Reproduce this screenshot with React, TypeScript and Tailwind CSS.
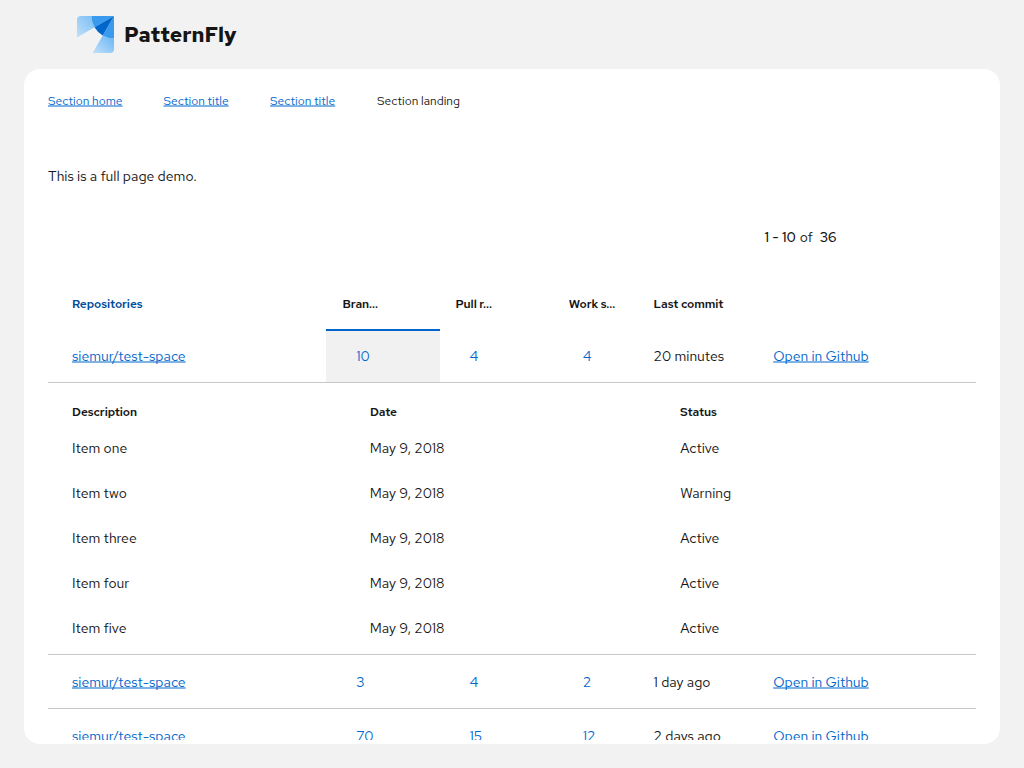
import React from "react";

const link = "text-[#0066cc] underline decoration-[#0066cc]/50 decoration-2 underline-offset-0 [text-decoration-skip-ink:none]";

const columns = "grid grid-cols-[278.45px_113.1px_113.2px_84.9px_119.6px_1fr]";

type Repo = {
  branches: string;
  pulls: string;
  spaces: string;
  commit: string;
  expanded?: boolean;
};

function Logo() {
  return (
    <svg width="37" height="37" viewBox="0 0 37 37" className="shrink-0">
      <defs>
        <linearGradient id="left" x1="18" y1="3" x2="0" y2="20" gradientUnits="userSpaceOnUse">
          <stop offset="0" stopColor="#7cc0f5" />
          <stop offset="1" stopColor="#bedefa" />
        </linearGradient>
        <linearGradient id="bottom" x1="34" y1="19" x2="18" y2="37" gradientUnits="userSpaceOnUse">
          <stop offset="0" stopColor="#6bb8f5" />
          <stop offset="1" stopColor="#bedefa" />
        </linearGradient>
      </defs>
      <path d="M4 0H14.5A22.5 22.5 0 0 0 17.5 11.25L0 21.4V4A4 4 0 0 1 4 0Z" fill="url(#left)" />
      <path d="M25.75 19.5A22.5 22.5 0 0 0 37 22.5V33A4 4 0 0 1 33 37H15.6Z" fill="url(#bottom)" />
      <path d="M37 0H14.5A22.5 22.5 0 0 0 17.5 11.25Z" fill="#3a9bee" />
      <path d="M37 0V22.5A22.5 22.5 0 0 1 25.75 19.5Z" fill="#3a9bee" />
      <path d="M37 0L17.5 11.25A22.5 22.5 0 0 0 25.75 19.5Z" fill="#0066cc" />
    </svg>
  );
}

function RepoRow({ branches, pulls, spaces, commit, expanded }: Repo) {
  return (
    <div className={`${columns} h-[54px] items-stretch border-b border-[#c7c7c7] text-[14px] leading-[21px]`}>
      <div className="flex items-center pl-6 pt-px">
        <a className={link}>siemur/test-space</a>
      </div>
      <div
        className={
          expanded
            ? "flex items-center border-t-2 border-[#0066cc] bg-[#f1f1f1] pb-px pl-[29.7px] text-[#0066cc]"
            : "flex items-center pl-[29.7px] pt-px text-[#0066cc]"
        }
      >
        {branches}
      </div>
      <div className="flex items-center pl-[30px] pt-px text-[#0066cc]">{pulls}</div>
      <div className="flex items-center pl-[30px] pt-px text-[#0066cc]">{spaces}</div>
      <div className="flex items-center pl-4 pt-px">{commit}</div>
      <div className="flex items-center pl-4 pt-px">
        <a className={link}>Open in Github</a>
      </div>
    </div>
  );
}

const items = [
  ["Item one", "Active"],
  ["Item two", "Warning"],
  ["Item three", "Active"],
  ["Item four", "Active"],
  ["Item five", "Active"],
];

export default function App() {
  return (
    <div className="flex h-[768px] w-[1024px] flex-col overflow-hidden bg-[#f2f2f2] font-['Red_Hat_Text','Lato',sans-serif] text-[#151515]">
      <header className="flex h-[69px] shrink-0 items-center gap-[10px] pl-[77px]">
        <Logo />
        <span className="pt-px font-['Red_Hat_Text','Inter',sans-serif] text-[21px] font-extrabold">
          PatternFly
        </span>
      </header>
      <main className="mx-6 mb-6 flex min-h-0 flex-1 flex-col rounded-2xl bg-white px-6 pb-1">
        <div className="flex min-h-0 flex-1 flex-col overflow-hidden">
          <nav className="mt-[23px] flex h-[18px] shrink-0 items-center text-[12px] leading-[18px]">
            <div className="w-[115.5px]"><a className={link}>Section home</a></div>
            <div className="w-[106.5px]"><a className={link}>Section title</a></div>
            <div className="w-[107px]"><a className={link}>Section title</a></div>
            <span>Section landing</span>
          </nav>
          <p className="mt-[56px] h-[21px] shrink-0 text-[14px] leading-[21px]">
            This is a full page demo.
          </p>
          <div className="mt-[40px] flex h-[21px] shrink-0 items-center pl-[716.5px] text-[14px] leading-[21px]">
            <b className="font-medium">1 - 10</b>
            <span className="ml-1">of</span>
            <b className="ml-[7px] font-medium">36</b>
          </div>
          <section className="mt-[31px] shrink-0">
            <div className={`${columns} h-[50px] items-center text-[12px] font-semibold leading-[18px] tracking-[-0.08px]`}>
              <div className="pl-6 text-[#004d99]">Repositories</div>
              <div className="pl-4">Bran...</div>
              <div className="pl-4">Pull r...</div>
              <div className="pl-4">Work s...</div>
              <div className="pl-4">Last commit</div>
              <div />
            </div>
            <RepoRow branches="10" pulls="4" spaces="4" commit="20 minutes" expanded />
            <div className="h-[272px] border-b border-[#c7c7c7] pl-6 pt-[14px]">
              <div className="grid h-[29px] grid-cols-[298px_310px_1fr] items-center text-[12px] font-semibold tracking-[-0.08px]">
                <div>Description</div>
                <div>Date</div>
                <div>Status</div>
              </div>
              {items.map(([name, status]) => (
                <div key={name} className="grid h-[45px] grid-cols-[297.8px_310.4px_1fr] items-center text-[14px]">
                  <div>{name}</div>
                  <div>May 9, 2018</div>
                  <div>{status}</div>
                </div>
              ))}
            </div>
            <RepoRow branches="3" pulls="4" spaces="2" commit="1 day ago" />
            <RepoRow branches="70" pulls="15" spaces="12" commit="2 days ago" />
          </section>
        </div>
      </main>
    </div>
  );
}
